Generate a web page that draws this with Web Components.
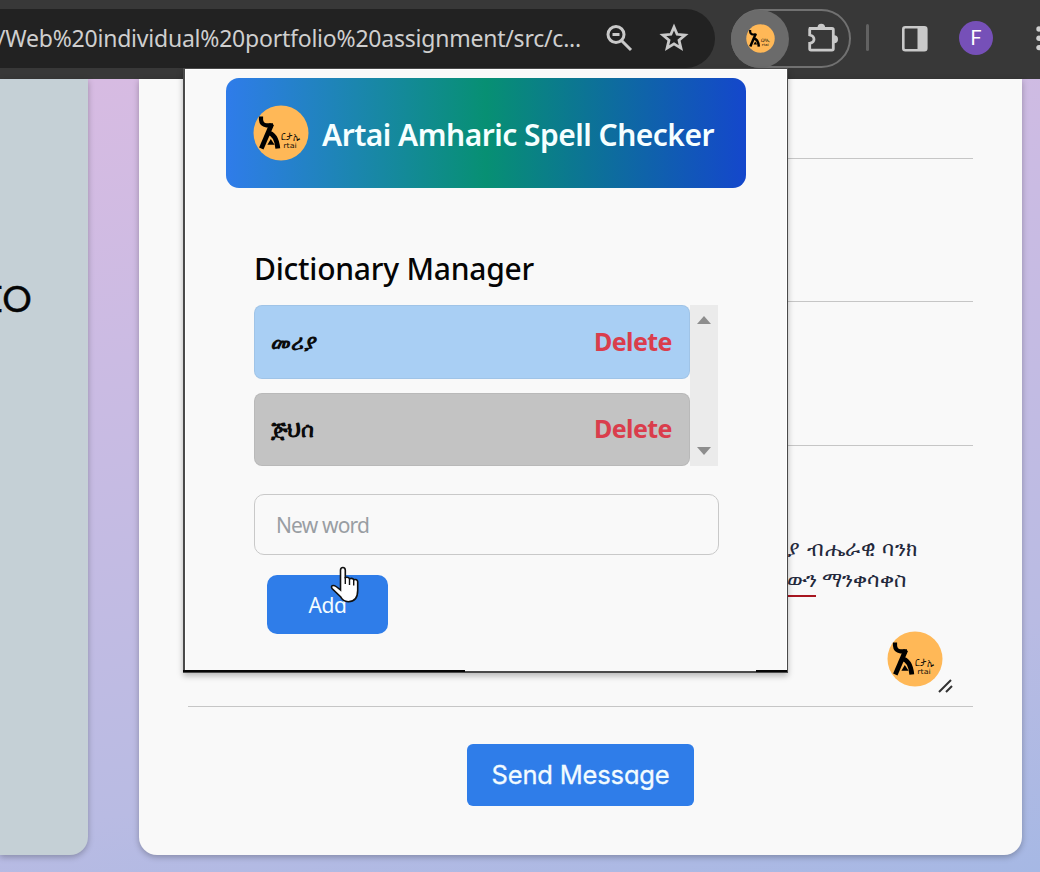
<!DOCTYPE html>
<html lang="en">
<head>
<meta charset="utf-8">
<title>Artai</title>
<style>
html,body{margin:0;height:872px;overflow:hidden;font-family:"Noto Sans","Open Sans",sans-serif}
</style>
</head>
<body>
<app-window></app-window>
<script>
const define=(name,html,extra)=>customElements.define(name,class extends HTMLElement{
  connectedCallback(){
    if(this.shadowRoot)return;
    const t=document.createElement('template');t.innerHTML=html;
    this.attachShadow({mode:'open'}).append(t.content.cloneNode(true));
    if(extra)extra.call(this);
  }
});

/* A line of text tracked so that it fills a given width. */
define('fit-text',`<style>:host{display:block;white-space:pre;flex:none}span{display:inline-block}</style><span><slot></slot></span>`,function(){
  const s=this.shadowRoot.querySelector('span'),w=+this.getAttribute('w');
  const n=this.textContent.length;
  this.style.width=w+'px';
  s.style.letterSpacing=((w-s.getBoundingClientRect().width)/n)+'px';
});

define('artai-logo',`<style>:host{display:block;width:56px;height:56px;flex:none}svg{display:block;width:100%;height:100%}</style>
<svg viewBox="0 0 56 56"><circle cx="28" cy="28" r="27.500" fill="#ffb857"/>
<path d="M8 11.500v3q.3 5.300 5.500 5.800h6.500" fill="none" stroke="#000" stroke-width="4.200"/>
<path d="M18.800 19 8.300 43.500" stroke="#000" stroke-width="4.800"/>
<path d="M14.500 27.500Q23.500 29 24.800 43.500" fill="none" stroke="#000" stroke-width="4.800"/>
<path d="M17.800 34l3.800 5.800h-7.200z" fill="#000"/>
<text x="28.300" y="34.500" font-family="Noto Sans,sans-serif" font-size="11.500" textLength="18.500" lengthAdjust="spacingAndGlyphs" fill="#17120a">ርታኢ</text>
<text x="30.300" y="43" font-family="DejaVu Sans" font-size="7" textLength="13.500" lengthAdjust="spacingAndGlyphs" fill="#17120a">rtai</text></svg>`);

define('browser-bar',`<style>
:host{display:flex;height:79px;background:#383838;box-sizing:border-box;padding-top:9px;align-items:flex-start;overflow:hidden}
.url{width:715px;height:59px;background:#222;border-radius:0 30px 30px 0;display:flex;align-items:center;flex:none;color:#cfcfcf;font-size:23px}
fit-text{margin:-2px 0 0 -3px}svg{display:block;flex:none;overflow:visible}
.ext{margin-left:15.500px;width:120px;height:59px;border:2px solid #717171;border-radius:30px;box-sizing:border-box;display:flex;align-items:center;flex:none}
.hot{width:58px;height:58px;margin-left:-1.500px;border-radius:50%;background:#6b6b6b;display:flex;align-items:center;justify-content:center;flex:none}
.hot artai-logo{width:29px;height:29px}
.sep{width:3px;height:27px;border-radius:2px;background:#626262;margin:15px 0 0 15.500px;flex:none}
.f{width:34px;height:34px;border-radius:50%;background:#7650b8;color:#fff;display:flex;align-items:center;justify-content:center;font:20px Roboto,sans-serif;flex:none}
</style>
<div class="url"><fit-text w="584">/Web%20individual%20portfolio%20assignment/src/c...</fit-text>
<svg style="margin:-2px 0 0 24px" width="28" height="28" viewBox="0 0 28 28" fill="none" stroke="#c9c9c9" stroke-width="3"><circle cx="11" cy="10.500" r="8"/><path d="M17 17l9 9M7.500 10.500h7"/></svg>
<svg style="margin:-2px 0 0 27px" width="28" height="28" viewBox="0 0 28 28" fill="none" stroke="#c9c9c9" stroke-width="2.800"><path d="M14 3l3.100 7.300 8 .7-6.100 5.200 1.900 7.900-6.900-4.200-6.900 4.200 1.900-7.900-6.100-5.200 8-.7z"/></svg></div>
<div class="ext"><div class="hot"><artai-logo></artai-logo></div>
<svg style="margin:-3px 0 0 18px" width="30" height="30" viewBox="0 0 30 30"><path d="M3 6.500h22q1.300 0 1.300 1.300v19q0 1.300-1.300 1.300H4q-1.300 0-1.300-1.300v-5.500q4.300-.7 4.300-4t-4.300-4.300V7.500z" fill="none" stroke="#c9c9c9" stroke-width="2.800"/><path d="M10.500 5.500a3.800 3.800 0 0 1 7.600 0zM27 13.200a4 4 0 0 1 0 8z" fill="#c9c9c9"/></svg></div>
<div class="sep"></div>
<svg style="margin:17px 0 0 33px" width="26" height="26" viewBox="0 0 26 26"><rect x="1.300" y="1.300" width="23" height="23" rx="2" fill="none" stroke="#c9c9c9" stroke-width="2.600"/><path d="M15.500 1h8v24h-8z" fill="#c9c9c9"/></svg>
<div class="f" style="margin:12px 0 0 31px">F</div>
<svg style="margin:16px 0 0 42px" width="8" height="28" fill="#d0d0d0"><circle cx="4" cy="4" r="2.700"/><circle cx="4" cy="13.300" r="2.700"/><circle cx="4" cy="22.600" r="2.700"/></svg>`);

define('word-row',`<style>
:host{display:flex;align-items:center;justify-content:space-between;height:74px;box-sizing:border-box;padding:0 17px 3px 16px;border-radius:8px;border:1px solid #0000000d;background:var(--row)}
.w{font-weight:700;font-size:22px;color:#0b0b0b}
fit-text{font-weight:700;font-size:25px;line-height:34px;color:#da3d4c}
</style><span class="w"><slot></slot></span><fit-text w="78">Delete</fit-text>`);

define('spell-popup',`<style>
:host{display:block;box-sizing:border-box;width:604px;height:605px;background:#f9f9f9;border:solid #4a4a4a;border-width:1px 1px 2px 2px;box-shadow:0 3px 6px #0004,inset 1px 1px #fff,inset -1px 0 #fff;padding:9px 40px 0 41px}
header{height:110px;width:520px;box-sizing:border-box;border-radius:13px;background:linear-gradient(90deg,#2f7cea,#079073 50%,#1447cc);display:flex;align-items:center;padding-left:27px;color:#f6ffff}
header fit-text{font-size:30px;font-weight:600;margin:3px 0 0 13px;line-height:42px}
main{padding:59px 28px 0}
h2{margin:0 0 14px;font-weight:500;font-size:30px;line-height:44px;color:#050505}
.list{display:flex;height:161px}
.rows{width:436px;display:flex;flex-direction:column;gap:14px}
.scroll{width:28px;background:#ebebeb;display:flex;flex-direction:column;align-items:center;justify-content:space-between;padding:11px 0;box-sizing:border-box}
.field{margin-top:28px;height:61px;border:1px solid #c9c9c9;border-radius:10px;box-sizing:border-box;display:flex;align-items:center;padding-left:21px;color:#999ea3;font-size:21px}
button{margin:20px 0 0 13px;width:121px;height:59px;border:0;border-radius:10px;background:#2f7de9;color:#f3fbff;font:21px "Noto Sans",sans-serif;display:flex;align-items:center;justify-content:center;padding:0}
.edge{display:flex;justify-content:space-between;margin:36px -40px 0 -43px;height:2px}
.edge b{background:#050505;height:2px}
</style>
<header><artai-logo></artai-logo><fit-text w="392">Artai Amharic Spell Checker</fit-text></header>
<main><h2><fit-text w="280">Dictionary Manager</fit-text></h2>
<div class="list"><div class="rows"><word-row style="--row:#a9cff4"><slot name="a"></slot></word-row><word-row style="--row:#c3c3c3;height:73px"><slot name="b"></slot></word-row></div>
<div class="scroll"><svg width="14" height="8"><path d="M0 8l7-8 7 8z" fill="#8d8d8d"/></svg><svg width="14" height="8"><path d="M0 0l7 8 7-8z" fill="#8d8d8d"/></svg></div></div>
<div class="field"><fit-text w="93">New word</fit-text></div>
<button><fit-text w="38">Add</fit-text></button></main>
<div class="edge"><b style="width:282px"></b><b style="width:31px"></b></div>`);

define('hand-cursor',`<style>:host{display:block;width:30px;height:38px}svg{display:block}</style>
<svg width="30" height="38" viewBox="0 0 30 38"><path d="M11.500 22V4.200q0-2.700 2.400-2.700t2.400 2.700v7.300q3.400-.8 4.200 1.200 3.300-1 4.200 1 3.500-1 4 2v8.500q0 11.500-9.500 11.500-5.200 0-7.700-5L3 22.500q-1.500-3 1.500-3 2 0 7 4.500z" fill="#fff" stroke="#111" stroke-width="1.600"/><path d="M16.300 11v7M20.500 12.500V19M24.700 14v5.500" stroke="#111" stroke-width="1.400"/></svg>`);

define('contact-form',`<style>
:host{display:grid;box-sizing:border-box;width:883px;height:776px;background:#f9f9f9;border-radius:0 0 18px 18px;box-shadow:0 2px 6px #0004;padding:0 49px;grid-template-rows:80px 143px 144px 261px 1fr;position:relative}
.line{border-bottom:1px solid #c6c6c6}
.msg{box-sizing:border-box;padding:87px 0 0 599px;font-size:21px;line-height:31px;color:#24293c;white-space:nowrap}
.msg i{font-style:normal;display:inline-block;height:31px;border-bottom:2px solid #a81620;margin-right:6px}
.float{position:absolute;left:748px;top:552px}
.grip{position:absolute;left:798px;top:598px}
button{justify-self:center;margin:37px 0 0;width:227px;height:62px;border:0;border-radius:6px;background:#2f7de9;color:#f2fbff;font:400 25.500px Inter,sans-serif;-webkit-text-stroke:.3px #f2fbff;font-feature-settings:"cv11";padding:0 0 2px;display:flex;align-items:center;justify-content:center}
</style>
<div class="line"></div><div class="line"></div><div class="line"></div>
<div class="line msg"><fit-text w="131">ያ ብሔራዊ ባንክ</fit-text><div style="display:flex"><i><fit-text w="29">ውን</fit-text></i><fit-text w="84">ማንቀሳቀስ</fit-text></div></div>
<button><fit-text w="178">Send Message</fit-text></button>
<artai-logo class="float"></artai-logo>
<svg class="grip" width="18" height="18" stroke="#333" stroke-width="2"><path d="M2 15L14 3M9 15l6-6"/></svg>`);

define('app-window',`<style>
:host{display:grid;grid-template-rows:79px 1fr;width:1040px;height:872px;overflow:hidden;position:relative}
.page{display:flex;gap:51px;background:linear-gradient(168deg,#d8bbe2 0%,#cbbbe3 30%,#b9bbe3 75%,#a6b8e4 100%)}
aside{width:88px;height:776px;flex:none;box-sizing:border-box;background:#c5d0d6;border-radius:0 0 18px 0;box-shadow:0 2px 6px #0004;padding-top:194px;font:37px/50px Lato,sans-serif;color:#050505;-webkit-text-stroke:.4px #050505}
aside div{width:32px;display:flex;justify-content:flex-end}
spell-popup{position:absolute;left:183px;top:68px;z-index:1;height:605px;width:605px}
hand-cursor{position:absolute;left:329px;top:566px;z-index:2}
</style>
<browser-bar></browser-bar>
<div class="page"><aside><div>EO</div></aside><contact-form></contact-form></div>
<spell-popup><span slot="a">መሪያ</span><span slot="b">ጅህሰ</span></spell-popup>
<hand-cursor></hand-cursor>`);
</script>
</body>
</html>
